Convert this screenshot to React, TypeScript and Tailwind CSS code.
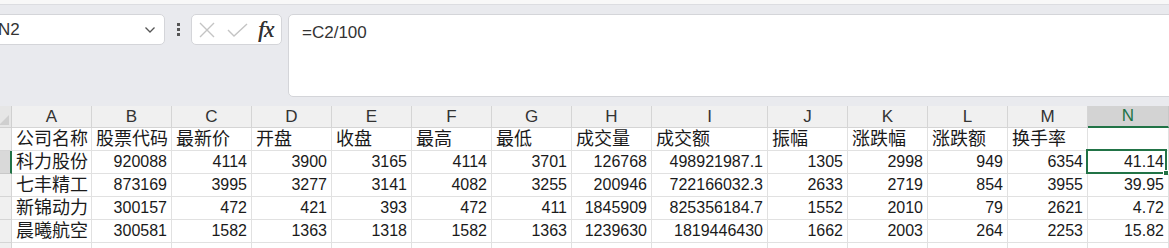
import React from "react";

const cols = ["A", "B", "C", "D", "E", "F", "G", "H", "I", "J", "K", "L", "M", "N"];
const head = ["公司名称", "股票代码", "最新价", "开盘", "收盘", "最高", "最低", "成交量", "成交额", "振幅", "涨跌幅", "涨跌额", "换手率", ""];
const data: string[][] = [
  ["科力股份", "920088", "4114", "3900", "3165", "4114", "3701", "126768", "498921987.1", "1305", "2998", "949", "6354", "41.14"],
  ["七丰精工", "873169", "3995", "3277", "3141", "4082", "3255", "200946", "722166032.3", "2633", "2719", "854", "3955", "39.95"],
  ["新锦动力", "300157", "472", "421", "393", "472", "411", "1845909", "825356184.7", "1552", "2010", "79", "2621", "4.72"],
  ["晨曦航空", "300581", "1582", "1363", "1318", "1582", "1363", "1239630", "1819446430", "1662", "2003", "264", "2253", "15.82"],
];

const font = { fontFamily: '"Liberation Sans", "Noto Sans CJK SC", sans-serif' };

export default function App() {
  return (
    <div className="w-[1169px] h-[248px] overflow-hidden bg-white flex flex-col" style={font}>
      <div className="h-[4px] bg-[#f8f8f8] shrink-0" />
      <div className="h-[1px] bg-[#dcdde1] shrink-0" />
      <div className="bg-[#e9eaee] flex items-start pt-[9px] pb-[9px] shrink-0">
        <div className="ml-[-10px] w-[175px] h-[31px] rounded-[5px] border border-[#d4d5d9] bg-white flex items-center pl-[7px] pr-[6px] text-[17px] text-[#333]">
          <span className="flex-1">N2</span>
          <svg width="12" height="8" viewBox="0 0 12 8" className="mr-[2px]">
            <path d="M1.5 1.5 L6 6 L10.5 1.5" fill="none" stroke="#555" strokeWidth="1.3" />
          </svg>
        </div>
        <div className="w-[26px] h-[31px] flex flex-col items-center justify-center gap-[2px]">
          <div className="w-[3px] h-[3px] bg-[#555]" />
          <div className="w-[3px] h-[3px] bg-[#555]" />
          <div className="w-[3px] h-[3px] bg-[#555]" />
        </div>
        <div className="w-[91px] h-[31px] rounded-[5px] border border-[#d4d5d9] bg-white flex items-center pl-[7px]">
          <svg width="16" height="16" viewBox="0 0 16 16">
            <path d="M1 1 L15 15 M15 1 L1 15" stroke="#c4c4c4" strokeWidth="1.4" fill="none" />
          </svg>
          <svg width="21" height="14" viewBox="0 0 21 14" className="ml-[12px]">
            <path d="M1 7 L7 13 L20 1" stroke="#c4c4c4" strokeWidth="1.4" fill="none" />
          </svg>
          <span
            className="ml-[10px] text-[23px] leading-none italic text-[#333] tracking-[-0.5px] [text-shadow:0.4px_0_0_#333]"
            style={{ fontFamily: '"Liberation Serif", "DejaVu Serif", serif' }}
          >
            fx
          </span>
        </div>
        <div className="ml-[6px] mr-[-10px] flex-1 h-[83px] rounded-[5px] border border-[#d4d5d9] bg-white pl-[13px] pt-[5px] text-[17px] text-[#333]">
          =C2/100
        </div>
      </div>
      <div className="grid grid-cols-[12px_80px_80px_80px_80px_80px_80px_80px_80px_116px_80px_80px_80px_80px_81px]">
        <div className="h-[22px] bg-[#e6e6e6] border-r border-b border-[#d0d0d0] relative">
          <svg width="10" height="10" viewBox="0 0 10 10" className="absolute right-[2px] bottom-[2px]">
            <path d="M10 0 L10 10 L0 10 Z" fill="#cfcfcf" />
          </svg>
        </div>
        {cols.map((c) =>
          c === "N" ? (
            <div
              key={c}
              className="h-[22px] bg-[#d3d3d3] border-b-2 border-[#217346] border-r border-r-[#c8c8c8] flex items-center justify-center text-[17px] text-[#217346]"
            >
              {c}
            </div>
          ) : (
            <div
              key={c}
              className="h-[22px] bg-[#f0f0f0] border-r border-b border-[#d5d5d5] flex items-center justify-center text-[17px] text-[#333]"
            >
              {c}
            </div>
          )
        )}
        <div className="h-[23px] bg-[#f0f0f0] border-r border-b border-[#d5d5d5]" />
        {head.map((h, i) => (
          <div
            key={"h" + i}
            className="h-[23px] border-r border-b border-[#e1e1e1] flex items-center pl-[4px] text-[18px] leading-none text-[#1a1a1a] whitespace-nowrap overflow-hidden"
          >
            {h}
          </div>
        ))}
        {data.map((row, r) => (
          <React.Fragment key={"r" + r}>
            {r === 0 ? (
              <div className="h-[23px] bg-[#d9d9d9] border-r-2 border-r-[#217346] border-b border-b-[#c8c8c8]" />
            ) : (
              <div className="h-[23px] bg-[#f0f0f0] border-r border-b border-[#d5d5d5]" />
            )}
            {row.map((v, i) => (
              <div
                key={"c" + r + i}
                className={
                  "h-[23px] border-r border-b border-[#e1e1e1] flex items-center leading-none text-[#1a1a1a] whitespace-nowrap relative " +
                  (i === 0 ? "pl-[4px] text-[18px]" : "justify-end pr-[4px] text-[16px]")
                }
              >
                {v}
                {r === 0 && i === 13 && (
                  <>
                    <div className="absolute left-[-2px] top-[-2px] right-[1px] bottom-[-1px] border-2 border-[#217346]" />
                    <div className="absolute right-[-1px] bottom-[-3px] w-[6px] h-[6px] bg-[#217346] border border-white" />
                  </>
                )}
              </div>
            ))}
          </React.Fragment>
        ))}
        <div className="h-[23px] bg-[#f0f0f0] border-r border-b border-[#d5d5d5]" />
        {cols.map((c) => (
          <div key={"e" + c} className="h-[23px] border-r border-b border-[#e1e1e1]" />
        ))}
      </div>
    </div>
  );
}
